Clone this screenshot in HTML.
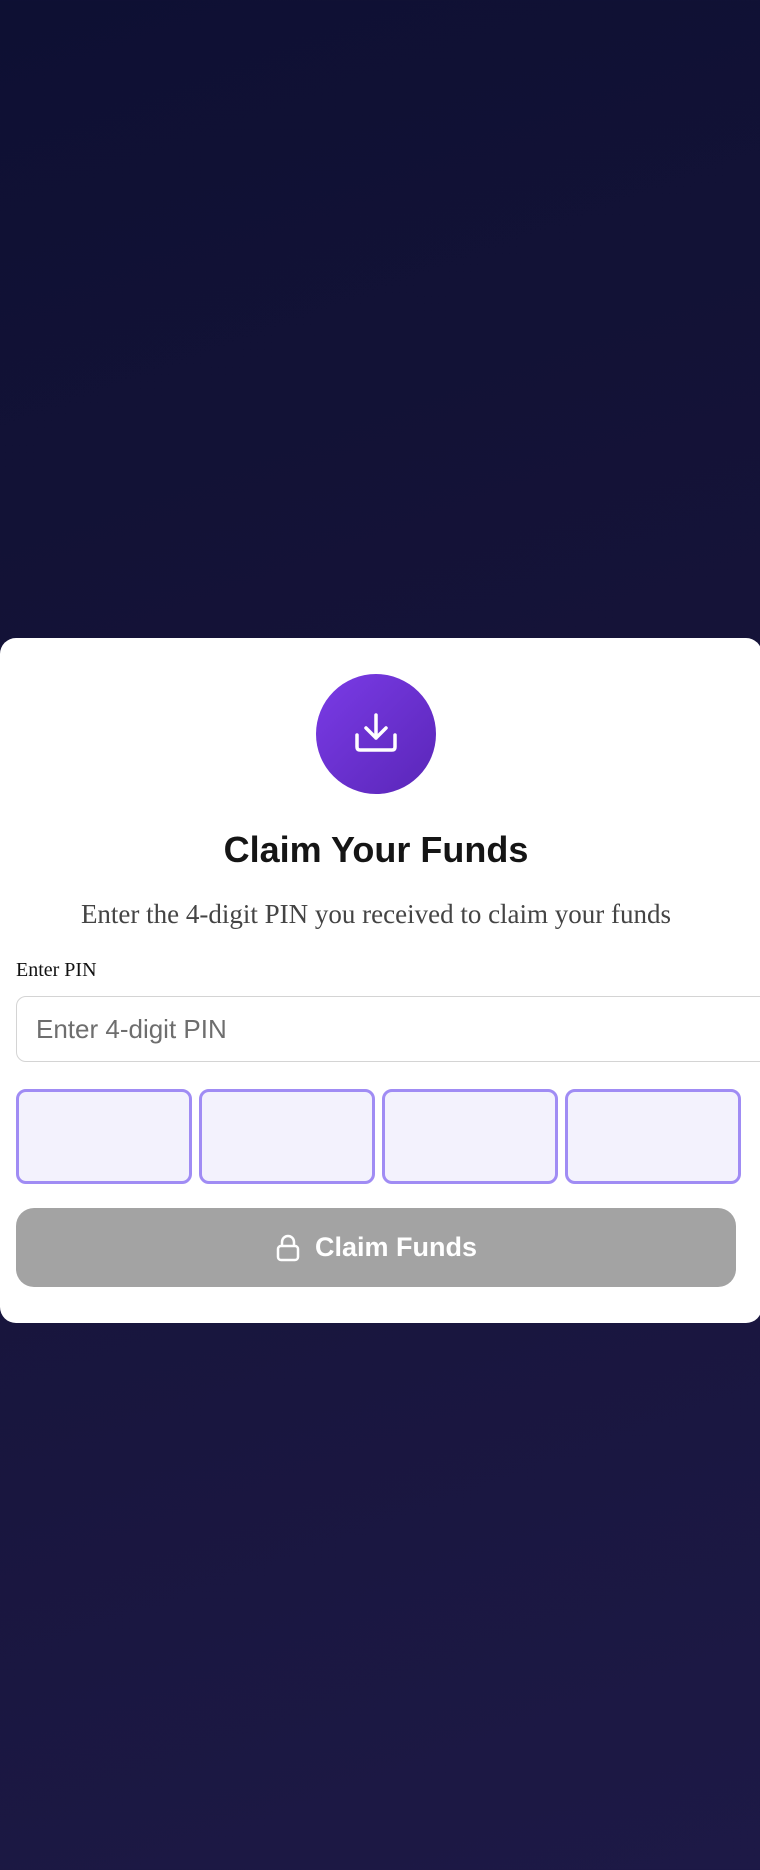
<!DOCTYPE html>
<html><head><meta charset="utf-8"><style>
html,body{margin:0;padding:0;width:760px;height:1870px;overflow:hidden}
body{background:linear-gradient(160deg,#0e1033 0%,#151338 40%,#1d1946 100%);position:relative;font-family:"Liberation Sans",sans-serif}
.card{position:absolute;left:0;top:638px;width:762px;height:685px;background:#fff;border-radius:16px}
.circle{position:absolute;left:316px;top:674px;width:120px;height:120px;border-radius:50%;background:linear-gradient(135deg,#7a3be6,#5a26b8)}
h1{position:absolute;left:0;width:752px;top:826px;margin:0;text-align:center;font-size:36px;font-weight:bold;color:#151515;line-height:48px}
.sub{position:absolute;left:0;width:752px;top:894px;text-align:center;font-family:"Liberation Serif",serif;font-size:27px;color:#444;line-height:40px}
.lbl{position:absolute;left:16px;top:955px;font-family:"Liberation Serif",serif;font-size:20px;color:#111;line-height:30px}
.inp{position:absolute;left:16px;top:996px;width:760px;height:66px;border:1px solid #d4d4d4;border-radius:10px;box-sizing:border-box;font-size:26px;color:#6e6e6e;padding-left:19px;line-height:64px}
.box{position:absolute;top:1089px;width:176px;height:95px;box-sizing:border-box;border:3px solid #a08cf4;border-radius:10px;background:#f3f2fd}
.btn{position:absolute;left:16px;top:1208px;width:720px;height:79px;border-radius:18px;background:#a3a3a3;color:#fff;font-weight:bold;font-size:27px;display:flex;align-items:center;justify-content:center}
</style></head><body>
<div class="card"></div>
<div class="circle"><svg width="120" height="120" viewBox="0 0 120 120"><g fill="none" stroke="#fff" stroke-width="3.5" stroke-linecap="round" stroke-linejoin="round"><path d="M60 41V64M50 54L60 64L70 54"/><path d="M41 61V73Q41 76 44 76H76Q79 76 79 73V61"/></g></svg></div>
<h1>Claim Your Funds</h1>
<div class="sub">Enter the 4-digit PIN you received to claim your funds</div>
<div class="lbl">Enter PIN</div>
<div class="inp">Enter 4-digit PIN</div>
<div class="box" style="left:16px"></div>
<div class="box" style="left:199px"></div>
<div class="box" style="left:382px"></div>
<div class="box" style="left:565px"></div>
<div class="btn"><svg width="26" height="28" viewBox="0 0 26 28" style="margin-right:14px"><g fill="none" stroke="#fff" stroke-width="2.5"><rect x="3" y="12" width="20" height="14" rx="3"/><path d="M7 12V8a6 6 0 0 1 12 0v4"/></g></svg>Claim Funds</div>
</body></html>
